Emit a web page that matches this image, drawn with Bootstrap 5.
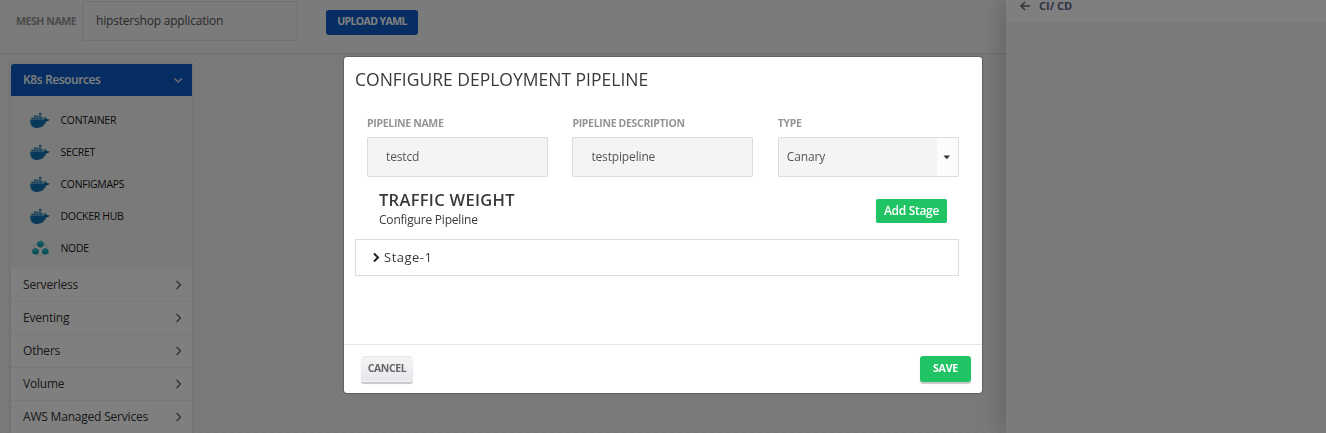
<!DOCTYPE html>
<html lang="en">
<head>
<meta charset="utf-8">
<meta name="viewport" content="width=device-width, initial-scale=1">
<title>Configure Deployment Pipeline</title>
<link href="https://cdn.jsdelivr.net/npm/bootstrap@5.3.0/dist/css/bootstrap.min.css" rel="stylesheet">
<style>
body{font-family:"Open Sans","Noto Sans",sans-serif;font-size:12px;color:#3c3c3c;height:433px;overflow:hidden;background:#f5f5f5;line-height:18px}
.workspace{height:433px;background-color:#f4f4f4;background-image:radial-gradient(#ececec 1px,transparent 1.6px),radial-gradient(#ececec 1px,transparent 1.6px);background-size:8px 8px;background-position:0 0,4px 4px}
.topbar{height:54px;background:#f6f6f6;border-bottom:1px solid #d6d6d6;padding-left:16px}
.field-label{font-size:10.5px;font-weight:700;color:#949494;white-space:nowrap;line-height:14px;letter-spacing:-.32px}
.topbar .field-label{width:66px;margin-top:14px;letter-spacing:-.4px}
.mesh-input{width:216px;height:40px;margin-top:1px;border:1px solid #e2e2e2;padding:0 13px;color:#555;white-space:nowrap;background:transparent;letter-spacing:-.2px}
.btn-upload{background:#0c5cc4;color:#fff;font-size:10.5px;font-weight:700;width:92px;height:25px;margin:10px 0 0 28px;padding:0 0 3px;border-radius:3px;line-height:14px;letter-spacing:-.6px}
.resource-nav{width:181px;margin:10px 0 0 11px;box-shadow:0 1px 5px rgba(0,0,0,.12);background:#f5f5f5}
.nav-head{height:32px;background:#0c5cc4;color:#fff;font-weight:600;padding:0 8px 0 12px;border-radius:3px 0 0 0;letter-spacing:-.4px}
.nav-items{padding:8px 0 5px;height:173px}
.nav-entry{height:32px;padding-left:19px;font-size:10.5px;color:#151515;letter-spacing:-.3px}
.nav-entry svg{width:20px;height:17px;margin-right:10.5px}
.nav-group{height:33px;padding:0 8px 0 12px;background:#fff;border-bottom:1px solid #f0f0f0;letter-spacing:-.2px;color:#333}
.nav-group svg{color:#666}
.side-panel{width:320px;height:433px;background:#f6f6f6;box-shadow:-4px 0 22px rgba(0,0,0,.2);position:relative}
.side-title{height:22px;background:#fff;padding:0 0 10px 13px;font-size:11px;line-height:12px;font-weight:700;color:#5d6685}
.side-title svg{margin-right:8px}
.pipeline-dialog{width:638px;max-width:638px;margin:57px auto 0}
.pipeline-dialog .modal-content{height:336px;border:0;border-radius:3px;box-shadow:0 0 2px rgba(0,0,0,.7);color:#3a3a3a}
.pipeline-title{font-size:17.5px;font-weight:400;line-height:24px;margin:10px 0 0 11px}
.form-grid{display:grid;grid-template-columns:repeat(3,181px);column-gap:24.4px;margin:25px 0 0 23px}
.value-box{height:40px;margin-top:7px;background:#f4f4f4;border:1px solid #ddd;border-radius:1px;padding:0 0 1px 18px;color:#555;letter-spacing:-.15px}
.select-box{padding:0 0 0 8px}
.select-box .caret{width:21px;height:100%;background:#fcfcfc}
.weight-row{margin:12px 35px 0}
.weight-title{font-size:16.5px;font-weight:600;line-height:22px;margin:0;letter-spacing:.3px}
.weight-note{line-height:17px;letter-spacing:-.2px}
.btn-stage{width:71px;height:24px;margin-top:4px;padding:0;border-radius:2px;background:#21c465;color:#fff;font-size:12px;font-weight:600;line-height:18px;letter-spacing:-.3px}
.stage-row{height:37px;margin:11px 23px 0 11px;border:1px solid #ddd;font-size:13px;padding:0 0 1px 17px;letter-spacing:.5px}
.pipeline-foot{height:49px;border-top:1px solid #e6e6e6;padding:11px 11px 0 17px}
.btn-foot{height:26px;padding:0 0 2px;border-radius:3px;font-size:10.5px;font-weight:700;line-height:14px;box-shadow:0 2px 1px #c5c5c5;letter-spacing:-.4px}
.btn-cancel{width:52px;color:#666;background:linear-gradient(#f4f4f6,#e7e6eb)}
.btn-save{width:51px;color:#fff;background:#21c465;letter-spacing:-.2px}
</style>
</head>
<body>
<svg class="d-none" xmlns="http://www.w3.org/2000/svg">
<symbol id="whale" viewBox="0 0 20 17"><path fill="#1474b5" d="M.4 7.6H14.2C15 6.8 14.4 5.4 15.2 4.8C16.2 5.4 16.6 6.2 16.6 7Q18.3 6.8 19.8 7.8Q18.4 9.6 16.2 9.6C14 14.2 11.1 16 7 16C2.3 16-.1 12.8.4 7.6Z"/><path fill="#318dbd" d="M1.3 5.6h2.3v1.8H1.3zM3.9 5.6h2.3v1.8H3.9zM6.5 5.6h2.3v1.8H6.5zM9.1 5.6h2.3v1.8H9.1zM11.7 5.6h1.7v1.8h-1.7zM3.9 3.4h2.3v1.9H3.9zM6.5 3.4h2.3v1.9H6.5zM9.1 3.4h2.3v1.9H9.1zM9.1.8h2.3V3H9.1z"/></symbol>
<symbol id="nodes" viewBox="0 0 20 17"><circle cx="10.5" cy="8.8" r="6.6" fill="none" stroke="#dcdcdc" stroke-width="1.2"/><path fill="#13a0ad" d="M10.5.8l3.2 1.8V6l-3.2 1.8L7.3 6V2.6zM5.5 8l3.2 1.8v3.4L5.5 15l-3.2-1.8V9.8zM15.3 8l3.2 1.8v3.4L15.3 15l-3.2-1.8V9.8z"/><path fill="#30bfc5" d="M10.5.8l3.2 1.8-3.2 1.8-3.2-1.8zM5.5 8l3.2 1.8-3.2 1.8-3.2-1.8zM15.3 8l3.2 1.8-3.2 1.8-3.2-1.8z"/></symbol>
<symbol id="right" viewBox="0 0 12 12"><path d="M4.5 2l4 4-4 4" fill="none" stroke="currentColor" stroke-width="1.4"/></symbol>
</svg>
<div class="d-flex overflow-hidden">
<main class="workspace flex-grow-1">
<header class="topbar d-flex align-items-start">
<span class="field-label">MESH NAME</span><div class="mesh-input d-flex align-items-center">hipstershop application</div><button class="btn btn-upload">UPLOAD YAML</button>
</header>
<nav class="resource-nav">
<div class="nav-head d-flex align-items-center justify-content-between">K8s Resources<svg width="12" height="12"><path d="M2.5 4.5l3.7 3.5 3.7-3.5" fill="none" stroke="#ddd" stroke-width="1.6"/></svg></div>
<div class="nav-items">
<div class="nav-entry d-flex align-items-center"><svg><use href="#whale"/></svg>CONTAINER</div>
<div class="nav-entry d-flex align-items-center"><svg><use href="#whale"/></svg>SECRET</div>
<div class="nav-entry d-flex align-items-center"><svg><use href="#whale"/></svg>CONFIGMAPS</div>
<div class="nav-entry d-flex align-items-center"><svg><use href="#whale"/></svg>DOCKER HUB</div>
<div class="nav-entry d-flex align-items-center"><svg><use href="#nodes"/></svg>NODE</div>
</div>
<div class="nav-group d-flex align-items-center justify-content-between">Serverless<svg width="12" height="12"><use href="#right"/></svg></div>
<div class="nav-group d-flex align-items-center justify-content-between">Eventing<svg width="12" height="12"><use href="#right"/></svg></div>
<div class="nav-group d-flex align-items-center justify-content-between">Others<svg width="12" height="12"><use href="#right"/></svg></div>
<div class="nav-group d-flex align-items-center justify-content-between">Volume<svg width="12" height="12"><use href="#right"/></svg></div>
<div class="nav-group d-flex align-items-center justify-content-between">AWS Managed Services<svg width="12" height="12"><use href="#right"/></svg></div>
</nav>
</main>
<aside class="side-panel flex-shrink-0"><div class="side-title d-flex align-items-center"><svg width="12" height="12"><path d="M11 6H2M6 2L2 6l4 4" fill="none" stroke="#666" stroke-width="1.5"/></svg>CI/ CD</div></aside>
</div>
<div class="modal-backdrop show"></div>
<div class="modal show d-block overflow-hidden" role="dialog">
<div class="modal-dialog pipeline-dialog"><div class="modal-content">
<h1 class="pipeline-title">CONFIGURE DEPLOYMENT PIPELINE</h1>
<div class="form-grid">
<div><div class="field-label">PIPELINE NAME</div><div class="value-box d-flex align-items-center">testcd</div></div>
<div><div class="field-label">PIPELINE DESCRIPTION</div><div class="value-box d-flex align-items-center">testpipeline</div></div>
<div><div class="field-label">TYPE</div><div class="value-box select-box d-flex align-items-center justify-content-between">Canary<div class="caret d-flex align-items-center justify-content-center"><svg width="8" height="5"><path d="M.5.5h6.5L3.8 4.2z" fill="#333"/></svg></div></div></div>
</div>
<div class="weight-row d-flex justify-content-between align-items-center"><div><h2 class="weight-title">TRAFFIC WEIGHT</h2><div class="weight-note">Configure Pipeline</div></div><button class="btn btn-stage">Add Stage</button></div>
<div class="stage-row d-flex align-items-center"><svg width="7" height="10" class="me-1"><path d="M1 1.5l4 4-4 4" fill="none" stroke="#222" stroke-width="2"/></svg>Stage-1</div>
<div class="pipeline-foot d-flex justify-content-between align-items-start mt-auto"><button class="btn btn-foot btn-cancel">CANCEL</button><button class="btn btn-foot btn-save">SAVE</button></div>
</div></div>
</div>
<script src="https://cdn.jsdelivr.net/npm/bootstrap@5.3.0/dist/js/bootstrap.bundle.min.js"></script>
</body>
</html>
